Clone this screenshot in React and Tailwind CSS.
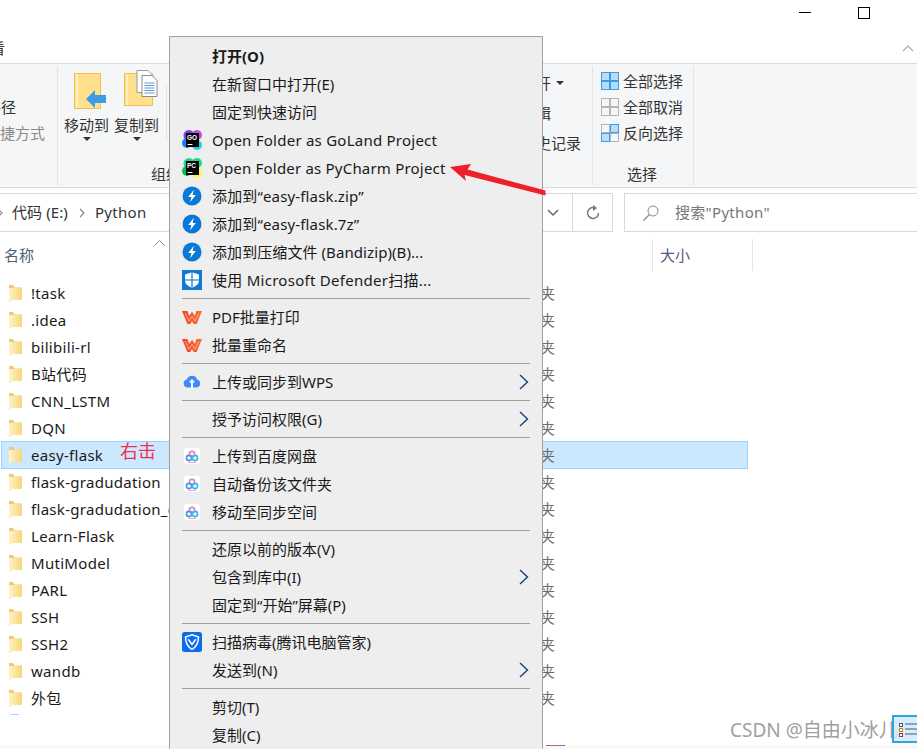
import React from 'react'

const files = [
  '!task', '.idea', 'bilibili-rl', 'B站代码', 'CNN_LSTM', 'DQN', 'easy-flask', 'flask-gradudation',
  'flask-gradudation_demo', 'Learn-Flask', 'MutiModel', 'PARL', 'SSH', 'SSH2', 'wandb', '外包',
]

// null = separator, tracking makes up for the narrower latin glyphs
const menu = [
  { label: '打开(O)', bold: true },
  { label: '在新窗口中打开(E)' },
  { label: '固定到快速访问' },
  { label: 'Open Folder as GoLand Project', icon: 'goland', tracking: 'tracking-[0.24px]' },
  { label: 'Open Folder as PyCharm Project', icon: 'pycharm', tracking: 'tracking-[0.2px]' },
  { label: '添加到“easy-flask.zip”', icon: 'bandizip', tracking: 'tracking-[0.15px]' },
  { label: '添加到“easy-flask.7z”', icon: 'bandizip', tracking: 'tracking-[0.15px]' },
  { label: '添加到压缩文件 (Bandizip)(B)...', icon: 'bandizip', tracking: 'tracking-[0.08px]' },
  { label: '使用 Microsoft Defender扫描...', icon: 'defender', tracking: 'tracking-[0.27px]' },
  null,
  { label: 'PDF批量打印', icon: 'wps' },
  { label: '批量重命名', icon: 'wps' },
  null,
  { label: '上传或同步到WPS', icon: 'cloud', sub: true },
  null,
  { label: '授予访问权限(G)', sub: true },
  null,
  { label: '上传到百度网盘', icon: 'baidu' },
  { label: '自动备份该文件夹', icon: 'baidu' },
  { label: '移动至同步空间', icon: 'baidu' },
  null,
  { label: '还原以前的版本(V)' },
  { label: '包含到库中(I)', sub: true },
  { label: '固定到“开始”屏幕(P)' },
  null,
  { label: '扫描病毒(腾讯电脑管家)', icon: 'tencent' },
  { label: '发送到(N)', sub: true },
  null,
  { label: '剪切(T)' },
  { label: '复制(C)' },
]

function JetBrains({ name, colors }) {
  return (
    <svg width="20" height="20" viewBox="0 0 20 20">
      <circle cx="7" cy="5.500" r="5.500" fill={colors[0]} />
      <circle cx="15" cy="5" r="5" fill={colors[1]} />
      <circle cx="5" cy="13" r="5" fill={colors[2]} />
      <circle cx="15" cy="15" r="5" fill={colors[3]} />
      <rect x="4" y="3" width="13" height="14" fill="#000" />
      <text x="5" y="9.500" fontSize="6.500" fontWeight="700" fill="#fff" fontFamily="Liberation Sans, sans-serif">{name}</text>
      <rect x="5.500" y="14" width="5" height="1" fill="#fff" />
    </svg>
  )
}

function MenuIcon({ name }) {
  if (name === 'goland') return <JetBrains name="GO" colors={['#7b3ff2', '#c44be0', '#1c7cf2', '#19d3e8']} />
  if (name === 'pycharm') return <JetBrains name="PC" colors={['#21d789', '#21d789', '#12b85c', '#fcf84a']} />
  if (name === 'bandizip') {
    return (
      <svg width="20" height="20" viewBox="0 0 20 20">
        <circle cx="10" cy="10" r="9.500" fill="#0b78d8" />
        <path d="M11.800 3.800 6.200 11h3.200l-1.200 5.200 5.600-7.200h-3.200z" fill="#fff" />
      </svg>
    )
  }
  if (name === 'defender') {
    return (
      <svg width="20" height="20" viewBox="0 0 20 20">
        <rect width="20" height="20" fill="#0f78d4" />
        <path d="M10 2.200 17 4.600v6c0 3.600-3.200 5.800-7 7.400-3.800-1.600-7-3.800-7-7.400v-6z" fill="#fff" />
        <path d="M10 2v16M3 10h14" stroke="#0f78d4" strokeWidth="1.200" />
      </svg>
    )
  }
  if (name === 'wps') {
    return (
      <svg width="20" height="15" viewBox="0 0 20 15">
        <defs>
          <linearGradient id="wpsRed" x1="0" y1="0" x2="1" y2="0">
            <stop offset="0" stopColor="#f5402c" />
            <stop offset="1" stopColor="#f7702c" />
          </linearGradient>
        </defs>
        <path d="M0 1h5.500L7.200 6 10 1.800 12.800 6l1.700-5H20l-5.400 13h-3L10 11l-1.600 3h-3z" fill="url(#wpsRed)" />
        <path d="M3.200 3.200 7 11.200l3-5 3 5 3.800-8" fill="none" stroke="#f9c4b4" strokeWidth="0.800" />
      </svg>
    )
  }
  if (name === 'cloud') {
    return (
      <svg width="20" height="20" viewBox="0 0 20 20">
        <path d="M5.500 15.500a4 4 0 0 1-.7-7.900A5.500 5.500 0 0 1 15.300 7.700a4 4 0 0 1-.6 7.800z" fill="#3d8bf5" />
        <path d="M10 7 6.800 10.600H9v6.400h2v-6.400h2.200z" fill="#fff" />
      </svg>
    )
  }
  if (name === 'baidu') {
    return (
      <svg width="20" height="20" viewBox="0 0 20 20">
        <rect x="2" y="2" width="16" height="16" rx="3" fill="#fff" />
        <circle cx="10" cy="8" r="2.600" fill="none" stroke="#e8849a" strokeWidth="1.600" />
        <circle cx="7" cy="12" r="2.600" fill="none" stroke="#4b93e8" strokeWidth="1.600" />
        <circle cx="13" cy="12" r="2.600" fill="none" stroke="#38b4ee" strokeWidth="1.600" />
        <path d="M6 16.500h8" stroke="#f0b0c0" strokeWidth="1" />
      </svg>
    )
  }
  if (name === 'tencent') {
    return (
      <svg width="20" height="20" viewBox="0 0 20 20">
        <rect width="20" height="20" rx="2.500" fill="#0b6cf0" />
        <path d="M10 2.800 16.500 5c0 5.500-1.800 9.600-6.500 12.300C5.300 14.600 3.500 10.500 3.500 5z" fill="none" stroke="#fff" strokeWidth="1.500" />
        <path d="M6.200 7.200 10 12.500l3.800-5.300" fill="none" stroke="#fff" strokeWidth="1.500" />
      </svg>
    )
  }
  return null
}

function Folder() {
  return (
    <svg width="13" height="17" viewBox="0 0 13 17" className="shrink-0">
      <defs>
        <linearGradient id="folderFill" x1="0" y1="0" x2="1" y2="0">
          <stop offset="0" stopColor="#fff3c8" />
          <stop offset="1" stopColor="#f8d678" />
        </linearGradient>
      </defs>
      <path d="M0 0h4l1.500 2.500H13V15H3l-3 2z" fill="#eccb78" />
      <path d="M3 3h10v12H3l-3 2V3z" fill="url(#folderFill)" />
    </svg>
  )
}

function MoveToIcon() {
  return (
    <svg width="33" height="36" viewBox="0 0 33 36">
      <rect x="0.500" y="0.500" width="26" height="35" fill="#ffe08c" stroke="#eec24a" />
      <rect x="2" y="1" width="2" height="34" fill="#fff0bd" />
      <path d="M12 26 21 17v5h11v8H21v5z" fill="#3f9be8" />
    </svg>
  )
}

function CopyToIcon() {
  return (
    <svg width="34" height="39" viewBox="0 0 34 39">
      <path d="M0.500 3.500h28v32H0.500z" fill="#ffe08c" stroke="#eec24a" />
      <rect x="2" y="4" width="2" height="31" fill="#fff0bd" />
      <path d="M13 .5h11l5 5v17H13z" fill="#fff" stroke="#9a9a9a" />
      <path d="M18 5.500h10l5 5v16H18z" fill="#fff" stroke="#8a8a8a" />
      <path d="M20.500 13h10M20.500 15.500h10M20.500 18h10M20.500 20.500h10M20.500 23h10" stroke="#5b93dc" />
    </svg>
  )
}

function SelectIcon({ cells }) {
  // cells: true = blue (selected), false = gray (empty), order TL TR BL BR
  const pos = [[0, 0], [9, 0], [0, 9], [9, 9]]
  return (
    <svg width="18" height="18" viewBox="0 0 18 18" className="shrink-0">
      {pos.map(([x, y], i) => (
        <rect
          key={i}
          x={x + 0.5}
          y={y + 0.5}
          width="8"
          height="8"
          fill={cells[i] ? '#b9dcf8' : '#f5f6f7'}
          stroke={cells[i] ? '#3d9be6' : '#b5b5b5'}
        />
      ))}
    </svg>
  )
}

function Caret() {
  return <span className="block w-0 h-0 border-x-[4px] border-x-transparent border-t-[4px] border-t-[#333]" />
}

function RibbonText({ children, className = '' }) {
  return <span className={`text-[15px] leading-[20px] text-[#333] whitespace-nowrap ${className}`}>{children}</span>
}

function MenuRow({ item }) {
  return (
    <div className="h-[28px] flex items-center pl-[12px] pr-[13px] text-[15px] text-[#1a1a1a] whitespace-nowrap">
      <span className="w-[20px] h-[20px] shrink-0 flex items-center justify-center">
        {item.icon && <MenuIcon name={item.icon} />}
      </span>
      <span className={`ml-[10px] ${item.bold ? 'font-bold' : ''} ${item.tracking || ''}`}>{item.label}</span>
      {item.sub && (
        <svg width="10" height="16" viewBox="0 0 10 16" className="ml-auto">
          <path d="M1 1l7.500 7L1 15" fill="none" stroke="#1d3f7a" strokeWidth="1.400" />
        </svg>
      )}
    </div>
  )
}

export default function App() {
  return (
    <div className="relative w-[917px] h-[749px] overflow-hidden bg-white flex flex-col font-['Noto_Sans','Noto_Sans_CJK_SC',sans-serif]">
      {/* title bar */}
      <div className="h-[33px] shrink-0 flex justify-end items-start pr-[47px]">
        <span className="w-[12px] h-px bg-black mt-[12px]" />
        <span className="w-[12px] h-[12px] border border-black mt-[7px] ml-[47px]" />
      </div>

      {/* tab row */}
      <div className="h-[31px] shrink-0 flex items-center justify-between border-b border-[#dadbdc] overflow-hidden">
        <span className="-ml-[10px] text-[15px] text-[#333]">看</span>
        <svg width="12" height="8" viewBox="0 0 12 8" className="mr-[3px]">
          <path d="M1 7l5-5 5 5" fill="none" stroke="#aaa" strokeWidth="1.200" />
        </svg>
      </div>

      {/* ribbon */}
      <div className="h-[124px] shrink-0 flex bg-[#f5f6f7] border-b border-[#dadbdc] py-[2px]">
        <div className="w-[58px] shrink-0 border-r border-[#e2e3e4] flex flex-col items-start pt-[31px] overflow-hidden">
          <RibbonText className="-ml-[14px]">路径</RibbonText>
          <span className="text-[15px] leading-[20px] whitespace-nowrap text-[#8a8a8a] mt-[6px]">捷方式</span>
        </div>

        <div className="w-[108px] shrink-0 flex flex-col">
          <div className="flex pl-[6px] gap-[5px] pt-[5px]">
            <div className="w-[45px] flex flex-col items-center">
              <div className="h-[38px] flex items-end"><span className="block ml-[7px]"><MoveToIcon /></span></div>
              <RibbonText className="mt-[6px]">移动到</RibbonText>
              <span className="mt-[2px]"><Caret /></span>
            </div>
            <div className="w-[45px] flex flex-col items-center">
              <div className="h-[38px] flex items-end"><span className="block ml-[8px]"><CopyToIcon /></span></div>
              <RibbonText className="mt-[6px]">复制到</RibbonText>
              <span className="mt-[2px]"><Caret /></span>
            </div>
          </div>
          <RibbonText className="ml-[93px] mt-auto mb-[1px] text-[#6f6f6f]">组织</RibbonText>
        </div>
        <div className="w-px h-[55px] bg-[#e2e3e4] mt-[19px] shrink-0" />

        {/* open group, mostly under the menu */}
        <div className="flex flex-col items-start ml-[354px] w-[71px] pt-[7px] shrink-0">
          <div className="flex items-center gap-[5px]">
            <RibbonText>打开</RibbonText>
            <Caret />
          </div>
          <RibbonText className="mt-[10px]">编辑</RibbonText>
          <RibbonText className="mt-[10px]">历史记录</RibbonText>
        </div>
        <div className="w-px bg-[#e2e3e4] shrink-0" />

        {/* select group */}
        <div className="w-[101px] shrink-0 border-r border-[#e2e3e4] flex flex-col pl-[8px]">
          <div className="flex flex-col gap-[6px] pt-[5px]">
            <div className="flex items-center gap-[4px]"><SelectIcon cells={[true, true, true, true]} /><RibbonText>全部选择</RibbonText></div>
            <div className="flex items-center gap-[4px]"><SelectIcon cells={[false, false, false, false]} /><RibbonText>全部取消</RibbonText></div>
            <div className="flex items-center gap-[4px]"><SelectIcon cells={[false, true, true, false]} /><RibbonText>反向选择</RibbonText></div>
          </div>
          <RibbonText className="mt-auto mb-[1px] ml-[26px] text-[#6f6f6f]">选择</RibbonText>
        </div>
      </div>

      {/* address row */}
      <div className="h-[39px] shrink-0 mt-[5px] flex">
        <div className="w-[613px] shrink-0 border-y border-r border-[#d9d9d9] flex items-center text-[15px] text-[#333]">
          <svg width="4" height="10" viewBox="0 0 4 10">
            <path d="M-2 1l4 4-4 4" fill="none" stroke="#888" strokeWidth="1.200" />
          </svg>
          <span className="ml-[8px] tracking-[0.1px]">代码 (E:)</span>
          <svg width="6" height="10" viewBox="0 0 6 10" className="ml-[11px]">
            <path d="M1 1l4 4-4 4" fill="none" stroke="#888" strokeWidth="1.200" />
          </svg>
          <span className="ml-[10px] tracking-[0.3px]">Python</span>
          <svg width="12" height="8" viewBox="0 0 12 8" className="ml-auto mr-[13px]">
            <path d="M1 1l5 5 5-5" fill="none" stroke="#666" strokeWidth="1.500" />
          </svg>
          <div className="w-[40px] h-full border-l border-[#d9d9d9] flex items-center justify-center">
            <svg width="16" height="16" viewBox="0 0 16 16">
              <path d="M13.500 8A5.500 5.500 0 1 1 9.500 2.700" fill="none" stroke="#777" strokeWidth="1.500" />
              <path d="M8 0l4 3-4 3z" fill="#777" />
            </svg>
          </div>
        </div>
        <div className="flex-1 ml-[11px] border-y border-l border-[#d9d9d9] flex items-center text-[15px] text-[#777]">
          <svg width="18" height="18" viewBox="0 0 18 18" className="ml-[17px]">
            <circle cx="11" cy="7" r="5" fill="none" stroke="#888" />
            <path d="M7.500 10.500 1.500 16.500" stroke="#888" strokeWidth="1.200" />
          </svg>
          <span className="ml-[15px] tracking-[0.3px]">搜索"Python"</span>
        </div>
      </div>

      {/* column headers */}
      <div className="h-[32px] shrink-0 mt-[7px] flex items-center text-[15px] text-[#4c607a]">
        <span className="ml-[4px]">名称</span>
        <svg width="11" height="6" viewBox="0 0 11 6" className="ml-[120px] self-start mt-[1px]">
          <path d="M.5 5.500l5-5 5 5" fill="none" stroke="#888" />
        </svg>
        <div className="ml-[487px] h-full w-[99px] box-content border-x border-[#e5e5e5] flex items-center">
          <span className="ml-[7px]">大小</span>
        </div>
      </div>

      {/* file list */}
      <div className="flex-1 mt-[9px] min-h-0 overflow-hidden">
        {files.map((name) => {
          const selected = name === 'easy-flask'
          return (
            <div
              key={name}
              className={`ml-px w-[747px] border grid grid-cols-[508px_1fr] items-center text-[15px] ${
                selected ? 'h-[28px] -mt-px bg-[#cce8ff] border-[#99d1ff]' : 'h-[27px] border-transparent'
              }`}
            >
              <div className="flex items-center pl-[7px] gap-[9px] text-[#1a1a1a]">
                <Folder />
                <span className="tracking-[0.3px]">{name}</span>
              </div>
              <span className="text-[#6d6d6d]">文件夹</span>
            </div>
          )
        })}
        <div className="ml-[11px] w-[8px] h-px bg-[#a8d4f5] mt-[2px]" />
      </div>

      {/* status bar */}
      <div className="h-[4px] shrink-0 bg-[#f7f7f7] flex">
        <span className="ml-[546px] w-[19px] h-px bg-gradient-to-r from-[#e0483a] to-[#3b78e7]" />
      </div>

      {/* annotation */}
      <span className="absolute left-[120px] top-[438px] text-[18px] leading-[26px] text-[#f0304a]">右击</span>

      {/* context menu */}
      <div className="absolute left-[169px] top-[36px] w-[374px] bg-[#eeeeee] border border-[#a0a0a0] pt-[5px]">
        {menu.map((item, i) =>
          item ? (
            <MenuRow key={i} item={item} />
          ) : (
            <div key={i} className="h-[9px] flex items-center pl-[12px] pr-[12px]">
              <div className="h-px w-full bg-[#a0a0a0]" />
            </div>
          )
        )}
      </div>

      {/* red arrow */}
      <svg width="110" height="40" viewBox="0 0 110 40" className="absolute left-[445px] top-[160px]">
        <path d="M5 7 26 4 22.500 9.500 100.500 30.500 100.500 35.500 19.500 15 21 21z" fill="#f0202a" />
      </svg>

      {/* watermark */}
      <span className="absolute left-[730px] top-[718px] text-[19px] leading-[24px] text-[#a0a0a0] whitespace-nowrap">CSDN @自由小冰儿</span>

      {/* details view toggle */}
      <div className="absolute left-[892px] top-[715px] w-[25px] h-[28px] bg-[#cce8ff]/80 border-2 border-r-0 border-[#33a3dc] flex items-center pl-[5px]">
        <svg width="18" height="16" viewBox="0 0 18 16">
          <rect x="0.500" y="2.500" width="3" height="3" fill="#fff" stroke="#555" />
          <rect x="0.500" y="7.500" width="3" height="3" fill="#fff" stroke="#c80" />
          <rect x="0.500" y="12.500" width="3" height="3" fill="#fff" stroke="#a33" />
          <path d="M6 3h12M6 8h12M6 13h12" stroke="#555" />
        </svg>
      </div>
    </div>
  )
}
